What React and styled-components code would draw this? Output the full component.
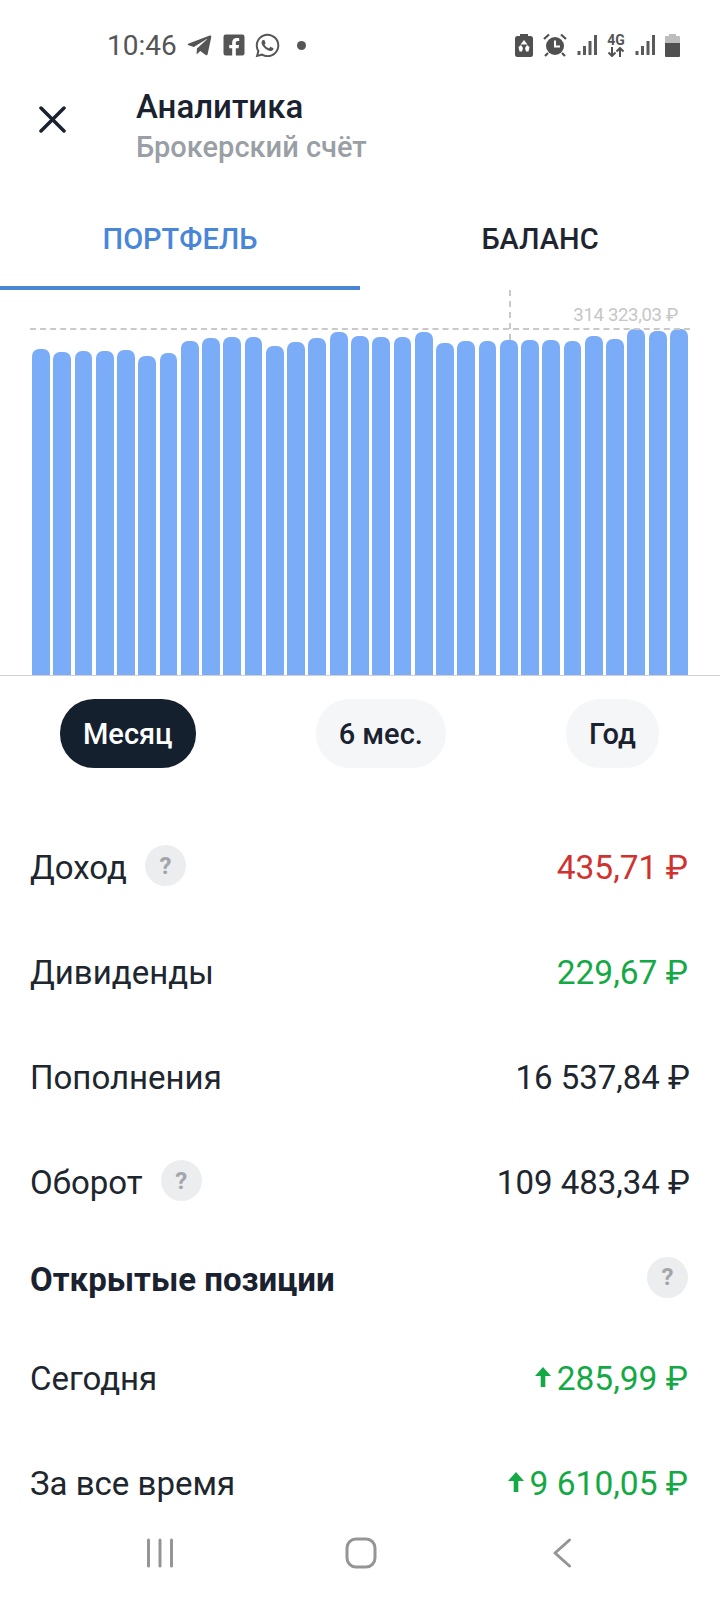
import React from 'react';
import styled, { createGlobalStyle } from 'styled-components';
import { FaTelegramPlane, FaFacebookSquare, FaWhatsapp } from 'react-icons/fa';

const GlobalStyle = createGlobalStyle`
  html, body {
    margin: 0;
    padding: 0;
    background: #fff;
  }
  * { box-sizing: border-box; }
`;

const Page = styled.div`
  position: relative;
  width: 720px;
  height: 1600px;
  overflow: hidden;
  background: #fff;
  font-family: Roboto, "Noto Sans", sans-serif;
  color: #1f2530;
`;

const StatusBar = styled.div`
  height: 84px;
  padding: 6px 40px 0 107px;
  display: flex;
  align-items: center;
  justify-content: space-between;
  color: #555;
`;

const StatusLeft = styled.div`
  display: flex;
  align-items: center;
`;

const Clock = styled.span`
  font-size: 28px;
  width: 79px;
`;

const NotifIcon = styled.span`
  display: flex;
  font-size: ${p => p.$size}px;
  margin-right: ${p => p.$gap}px;
`;

const Dot = styled.span`
  width: 9px;
  height: 9px;
  border-radius: 50%;
  background: #555;
  margin-left: 13px;
`;

const StatusRight = styled.div`
  display: flex;
  align-items: center;
  gap: 10px;
`;

const NetBlock = styled.span`
  display: flex;
  flex-direction: column;
  align-items: center;
  width: 20px;
  font-size: 14px;
  font-weight: 700;
  line-height: 14px;
  margin: 0 -1px;
`;

const Header = styled.div`
  height: 102px;
  display: flex;
  align-items: flex-start;
  padding: 2px 0 0 39px;
`;

const Close = styled.div`
  width: 97px;
  display: flex;
  margin-top: 20px;
`;

const Titles = styled.div`
  display: flex;
  flex-direction: column;
`;

const Title = styled.div`
  font-size: 33px;
  font-weight: 500;
  line-height: 42px;
  color: #1a2230;
`;

const Subtitle = styled.div`
  font-size: 29px;
  font-weight: 500;
  line-height: 38px;
  color: #9a9fa5;
`;

const Tabs = styled.div`
  display: flex;
  height: 104px;
`;

const Tab = styled.div`
  width: 360px;
  display: flex;
  align-items: center;
  justify-content: center;
  font-size: 29px;
  font-weight: 500;
  padding-top: 5px;
  color: ${p => (p.$active ? '#4a86d8' : '#1f2530')};
  border-bottom: 4px solid ${p => (p.$active ? '#4a86d8' : 'transparent')};
`;

const Chart = styled.div`
  position: relative;
  height: 386px;
  padding: 0 32px;
  display: flex;
  align-items: flex-end;
  justify-content: space-between;
  border-bottom: 1px solid #cfd0d2;
`;

const Bar = styled.div`
  width: 17.8px;
  background: #7bacf8;
  border-radius: 7px 7px 0 0;
`;

const MaxLine = styled.div`
  position: absolute;
  left: 30px;
  right: 30px;
  top: 38px;
  border-top: 2px dashed #c9c9c9;
`;

const MaxMark = styled.div`
  position: absolute;
  left: 509px;
  top: 0;
  height: 50px;
  border-left: 2px dashed #c9c9c9;
`;

const MaxLabel = styled.div`
  position: absolute;
  right: 42px;
  top: 14px;
  font-size: 18.5px;
  letter-spacing: -0.3px;
  color: #c6c6c6;
`;

const Periods = styled.div`
  display: flex;
  justify-content: space-between;
  padding: 0 61px 0 60px;
  margin-top: 23px;
  margin-bottom: 47px;
`;

const Pill = styled.div`
  height: 69px;
  padding: 0 ${p => p.$pad}px;
  border-radius: 34px;
  display: flex;
  align-items: center;
  font-size: 29px;
  font-weight: 500;
  background: ${p => (p.$active ? '#15202e' : '#f4f6f8')};
  color: ${p => (p.$active ? '#fff' : '#1a2230')};
`;

const Row = styled.div`
  height: ${p => (p.$heading ? 88 : 105)}px;
  margin-bottom: ${p => (p.$heading ? 3 : 0)}px;
  padding: 0 ${p => (p.$heading ? 32 : 30)}px 0 30px;
  display: flex;
  align-items: center;
  justify-content: space-between;
`;

const Label = styled.div`
  display: flex;
  align-items: center;
  font-size: 33px;
  color: #20262e;
`;

const Heading = styled.div`
  font-size: 33px;
  font-weight: 700;
  color: #1a2230;
`;

const Help = styled.span`
  width: 41px;
  height: 41px;
  border-radius: 50%;
  margin-left: ${p => p.$gap || 0}px;
  margin-top: -4px;
  background: #ebedee;
  color: #a2a5aa;
  font-size: 24px;
  font-weight: 700;
  display: flex;
  align-items: center;
  justify-content: center;
`;

const Amount = styled.div`
  display: flex;
  align-items: center;
  font-size: ${p => (p.$color ? 33.5 : 33)}px;
  margin-right: ${p => (p.$color ? 2 : 0)}px;
  color: ${p => p.$color || '#20262e'};
`;

const Arrow = styled.svg`
  width: 16px;
  height: 20px;
  margin-right: 6px;
  margin-top: -4px;
`;

const NavBar = styled.div`
  position: absolute;
  left: 0;
  right: 0;
  bottom: 0;
  height: 92px;
  padding-bottom: 2px;
  background: #fff;
  display: flex;
  align-items: center;
  color: #959595;
`;

const NavSlot = styled.div`
  position: absolute;
  left: ${p => p.$x}px;
  display: flex;
`;

const tops = [349, 352, 351, 351, 350, 356, 353, 341, 338, 337, 337, 346, 342, 338, 332, 336,
  337, 337, 332, 343, 341, 341, 340, 340, 340, 341, 336, 339, 329, 331, 329];

const UpArrow = () => (
  <Arrow viewBox="0 0 16 20">
    <path d="M8 0 L16 9 H10.300 V20 H5.700 V9 H0 Z" fill="currentColor" />
  </Arrow>
);

const Signal = () => (
  <svg width="20" height="22" viewBox="0 0 20 22" fill="none" stroke="#5a5a5a" strokeWidth="3">
    <path d="M2 21v-4" />
    <path d="M7.500 21v-9" />
    <path d="M13 21v-14" />
    <path d="M18.500 21V1" />
  </svg>
);

export default function App() {
  return (
    <Page>
      <GlobalStyle />
      <StatusBar>
        <StatusLeft>
          <Clock>10:46</Clock>
          <NotifIcon $size={27} $gap={9}><FaTelegramPlane /></NotifIcon>
          <NotifIcon $size={24} $gap={8}><FaFacebookSquare /></NotifIcon>
          <NotifIcon $size={27} $gap={3}><FaWhatsapp /></NotifIcon>
          <Dot />
        </StatusLeft>
        <StatusRight>
          <svg width="18" height="23" viewBox="0 0 18 23">
            <path d="M5 0h8v2h2.500A2.500 2.500 0 0 1 18 4.500V20.500A2.500 2.500 0 0 1 15.500 23h-13A2.500 2.500 0 0 1 0 20.500V4.500A2.500 2.500 0 0 1 2.500 2H5z" fill="#505050" />
            <path d="M9 6l3.500 4.500h-7zM3.500 13l2.500-2 2 3-1 3.500H4.500zM14.500 13l-2.500-2-2 3 1 3.500h2.500z" fill="#fff" />
          </svg>
          <svg width="24" height="24" viewBox="0 0 24 24">
            <circle cx="12" cy="13" r="9" fill="#505050" />
            <path d="M12 7.500V13.500H17" fill="none" stroke="#fff" strokeWidth="2" />
            <path d="M1 6L6 1.500M23 6L18 1.500M5 20l-3 3M19 20l3 3" stroke="#505050" strokeWidth="2.200" />
          </svg>
          <Signal />
          <NetBlock>
            4G
            <svg width="18" height="10" viewBox="0 0 18 10" fill="none" stroke="#505050" strokeWidth="2">
              <path d="M5 0v9M1.500 5.500L5 9l3.500-3.500" />
              <path d="M13 10V1M9.500 4.500L13 1l3.500 3.500" />
            </svg>
          </NetBlock>
          <Signal />
          <svg width="15" height="23" viewBox="0 0 15 23">
            <path d="M4 0h7v2h3a1 1 0 0 1 1 1v6H0V3a1 1 0 0 1 1-1h3z" fill="#bdbdbd" />
            <path d="M0 9h15v13a1 1 0 0 1-1 1H1a1 1 0 0 1-1-1z" fill="#505050" />
          </svg>
        </StatusRight>
      </StatusBar>

      <Header>
        <Close>
          <svg width="27" height="27" viewBox="0 0 27 27" stroke="#1a2230" strokeWidth="3.500" strokeLinecap="round">
            <path d="M2 2L25 25M25 2L2 25" />
          </svg>
        </Close>
        <Titles>
          <Title>Аналитика</Title>
          <Subtitle>Брокерский счёт</Subtitle>
        </Titles>
      </Header>

      <Tabs>
        <Tab $active>ПОРТФЕЛЬ</Tab>
        <Tab>БАЛАНС</Tab>
      </Tabs>

      <Chart>
        {tops.map((top, i) => (
          <Bar key={i} style={{ height: 675 - top }} />
        ))}
        <MaxLine />
        <MaxMark />
        <MaxLabel>314 323,03 ₽</MaxLabel>
      </Chart>

      <Periods>
        <Pill $active $pad={23}>Месяц</Pill>
        <Pill $pad={23}>6 мес.</Pill>
        <Pill $pad={23}>Год</Pill>
      </Periods>

      <Row>
        <Label>Доход<Help $gap={18}>?</Help></Label>
        <Amount $color="#d0322f">435,71 ₽</Amount>
      </Row>
      <Row>
        <Label>Дивиденды</Label>
        <Amount $color="#14a945">229,67 ₽</Amount>
      </Row>
      <Row>
        <Label>Пополнения</Label>
        <Amount>16 537,84 ₽</Amount>
      </Row>
      <Row>
        <Label>Оборот<Help $gap={18}>?</Help></Label>
        <Amount>109 483,34 ₽</Amount>
      </Row>
      <Row $heading>
        <Heading>Открытые позиции</Heading>
        <Help>?</Help>
      </Row>
      <Row>
        <Label>Сегодня</Label>
        <Amount $color="#14a945"><UpArrow />285,99 ₽</Amount>
      </Row>
      <Row>
        <Label>За все время</Label>
        <Amount $color="#14a945"><UpArrow />9 610,05 ₽</Amount>
      </Row>

      <NavBar>
        <NavSlot $x={146}>
          <svg width="28" height="30" viewBox="0 0 28 30" stroke="currentColor" strokeWidth="3" strokeLinecap="round">
            <path d="M2.500 2v26M14 2v26M25.500 2v26" />
          </svg>
        </NavSlot>
        <NavSlot $x={345}>
          <svg width="32" height="32" viewBox="0 0 32 32" fill="none" stroke="currentColor" strokeWidth="3">
            <rect x="2" y="2" width="28" height="28" rx="9" />
          </svg>
        </NavSlot>
        <NavSlot $x={553}>
          <svg width="19" height="30" viewBox="0 0 19 30" fill="none" stroke="currentColor" strokeWidth="3" strokeLinecap="round" strokeLinejoin="round">
            <path d="M16.500 2L2 15l14.500 13" />
          </svg>
        </NavSlot>
      </NavBar>
    </Page>
  );
}
